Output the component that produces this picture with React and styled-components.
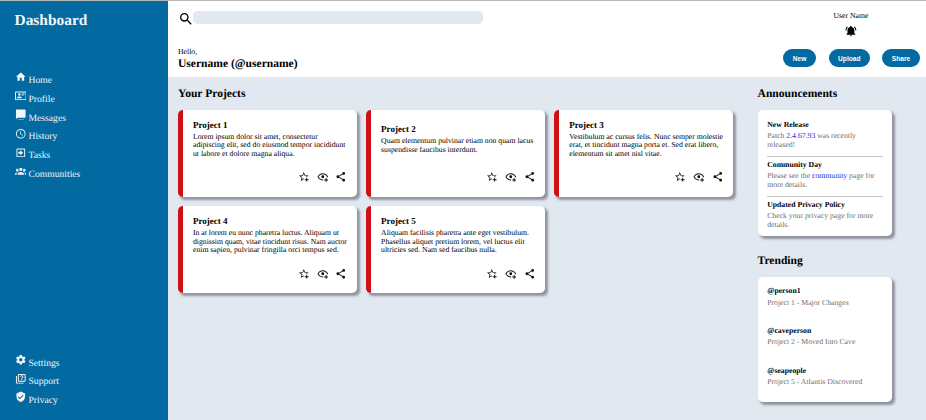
import React from "react";
import styled, { createGlobalStyle } from "styled-components";

const GlobalStyle = createGlobalStyle`
  *, *::before, *::after { box-sizing: border-box; }
  body {
    margin: 0;
    overflow: hidden;
    font-family: "Liberation Serif", "Times New Roman", serif;
    text-rendering: geometricPrecision;
    color: #000;
  }
  h1, h2, h3, p { margin: 0; }
`;

const Page = styled.div`
  display: grid;
  grid-template-columns: 168.4px 1fr;
  grid-template-rows: 76.4px 1fr;
  width: 926px;
  height: 420px;
  background: #e2e8f0;
  border-top: 1px solid #b4b6b8;
`;

const Sidebar = styled.aside`
  grid-row: 1 / 3;
  display: flex;
  flex-direction: column;
  padding: 11px 0 10.6px 14.5px;
  background: #0369a1;
  color: #f1f6fa;
`;

const Brand = styled.h1`
  font-size: 15.43px;
  line-height: 18px;
`;

const Nav = styled.nav`
  display: flex;
  flex-direction: column;
  margin-top: ${(p) => (p.$bottom ? "auto" : "40.6px")};
`;

const NavItem = styled.a`
  display: flex;
  gap: 2.4px;
  height: 18.8px;
  font-size: 9.65px;
  line-height: 18.8px;
`;

const NavLabel = styled.span`
  padding-top: 1.5px;
`;

const NavIconBox = styled.span`
  display: flex;
  width: 11.6px;
  padding-top: 0.8px;
`;

const Svg = styled.svg`
  display: block;
  flex: none;
  width: ${(p) => p.$size}px;
  height: ${(p) => p.$size}px;
  fill: currentColor;
`;

const Header = styled.header`
  display: flex;
  justify-content: space-between;
  padding-left: 9.6px;
  background: #fff;
`;

const HeaderLeft = styled.div`
  display: flex;
  flex-direction: column;
`;

const SearchRow = styled.div`
  display: flex;
  align-items: flex-start;
  height: 45.6px;
  padding-top: 9.6px;
  margin-left: -0.4px;
`;

const SearchField = styled.div`
  width: 289.5px;
  height: 13.1px;
  margin: 0.4px 0 0 -0.5px;
  border-radius: 4.8px;
  background: #e2e8f0;
`;

const Hello = styled.p`
  font-size: 7.72px;
  line-height: 10px;
`;

const Username = styled.h2`
  font-size: 11.57px;
  line-height: 13px;
`;

const HeaderRight = styled.div`
  display: flex;
  flex-direction: column;
  align-items: center;
  width: 150px;
  padding: 9.7px 0 0;
`;

const UserName = styled.p`
  font-size: 7.72px;
  line-height: 10px;
`;

const Bell = styled.div`
  margin-top: 4.3px;
`;

const Actions = styled.div`
  display: flex;
  align-self: stretch;
  gap: 12.4px;
  margin-top: 12.6px;
  padding-left: 7px;
`;

const Button = styled.button`
  width: ${(p) => p.$width}px;
  height: 17.3px;
  flex: none;
  padding: 0;
  border: 0;
  border-radius: 9px;
  background: #0369a1;
  color: #fff;
  font: bold 6.6px/17px "Liberation Sans", Arial, sans-serif;
`;

const Content = styled.main`
  display: grid;
  grid-template-columns: 554.8px 1fr;
  column-gap: 24.7px;
  padding: 9.6px 0 0 9.7px;
`;

const Section = styled.section`
  display: flex;
  flex-direction: column;
`;

const SectionTitle = styled.h2`
  font-size: 11.57px;
  line-height: 13px;
  margin-bottom: 10px;
`;

const CardGrid = styled.div`
  display: grid;
  grid-template-columns: repeat(3, 178.5px);
  grid-auto-rows: 86.7px;
  gap: 9.65px;
`;

const Card = styled.article`
  display: flex;
  flex-direction: column;
  padding: 7.6px 9.65px 13.9px 9.9px;
  border-left: 5px solid #cf1014;
  border-radius: 4.8px;
  background: #fff;
  box-shadow: 2.4px 2.4px 2.4px #9094a0;
`;

const CardBody = styled.div`
  display: flex;
  flex-direction: column;
  justify-content: center;
  height: 42.4px;
`;

const CardTitle = styled.h3`
  font-size: 9.03px;
  line-height: 13.2px;
  margin-bottom: 0.8px;
`;

const CardText = styled.p`
  font-size: 7.72px;
  line-height: 8.7px;
  white-space: pre;
`;

const CardActions = styled.div`
  display: flex;
  justify-content: flex-end;
  gap: 7.2px;
  margin-top: auto;
  color: #111;
`;

const Panel = styled.div`
  display: flex;
  flex-direction: column;
  width: 134.8px;
  height: ${(p) => p.$height}px;
  padding: 9.6px 9.65px 0;
  margin-bottom: ${(p) => p.$after || 0}px;
  border-radius: 4.8px;
  background: #fff;
  box-shadow: 2.4px 2.4px 2.4px #9094a0;
`;

const PanelItem = styled.div`
  flex: none;
  height: ${(p) => p.$height}px;
`;

const ItemTitle = styled.h3`
  font-size: 7.72px;
  line-height: 10px;
  margin-bottom: 2.3px;
`;

const ItemText = styled.p`
  font-size: 7.72px;
  line-height: 8.7px;
  color: #707070;
  white-space: pre;
`;

const Link = styled.span`
  color: #2525ee;
`;

const Rule = styled.div`
  height: 1.5px;
  margin: 6.6px 0 0;
  background: #c4c4c4;
`;

const paths = {
  home: "M10,20V14H14V20H19V12H22L12,3L2,12H5V20H10Z",
  profile:
    "M22,3H2C0.91,3.04 0.04,3.91 0,5V19C0.04,20.09 0.91,20.96 2,21H22C23.09,20.96 23.96,20.09 24,19V5C23.96,3.91 23.09,3.04 22,3M22,19H2V5H22V19M14,17V15.75C14,14.09 10.66,13.25 9,13.25C7.34,13.25 4,14.09 4,15.75V17H14M9,7A2.5,2.5 0 0,0 6.5,9.5A2.5,2.5 0 0,0 9,12A2.5,2.5 0 0,0 11.5,9.5A2.5,2.5 0 0,0 9,7M14,7V8H20V7H14M14,9V10H20V9H14M14,11V12H18V11H14",
  messages:
    "M3,1H21A1,1 0 0,1 22,2V17A1,1 0 0,1 21,18H6L2,21V2A1,1 0 0,1 3,1M7.5,20.5H9.5V22.5H7.5ZM11.5,20.5H13.5V22.5H11.5ZM15.5,20.5H17.5V22.5H15.5Z",
  history:
    "M12,20A8,8 0 0,0 20,12A8,8 0 0,0 12,4A8,8 0 0,0 4,12A8,8 0 0,0 12,20M12,2A10,10 0 0,1 22,12A10,10 0 0,1 12,22C6.47,22 2,17.5 2,12A10,10 0 0,1 12,2M12.5,7V12.25L17,14.92L16.25,16.15L11,13V7H12.5Z",
  tasks:
    "M5,3H19A2,2 0 0,1 21,5V19A2,2 0 0,1 19,21H5A2,2 0 0,1 3,19V5A2,2 0 0,1 5,3M5,5V19H19V5H5M7,10H11V7L17,12L11,17V14H7Z",
  communities:
    "M12,5.5A3.5,3.5 0 0,1 15.5,9A3.5,3.5 0 0,1 12,12.5A3.5,3.5 0 0,1 8.5,9A3.5,3.5 0 0,1 12,5.5M5,8C5.56,8 6.08,8.15 6.53,8.42C6.38,9.85 6.8,11.27 7.66,12.38C7.16,13.34 6.16,14 5,14A3,3 0 0,1 2,11A3,3 0 0,1 5,8M19,8A3,3 0 0,1 22,11A3,3 0 0,1 19,14C17.84,14 16.84,13.34 16.34,12.38C17.2,11.27 17.62,9.85 17.47,8.42C17.92,8.15 18.44,8 19,8M5.5,18.25C5.5,16.18 8.41,14.5 12,14.5C15.59,14.5 18.5,16.18 18.5,18.25V20H5.5V18.25M0,20V18.5C0,17.11 1.89,15.94 4.45,15.6C3.86,16.28 3.5,17.22 3.5,18.25V20H0M24,20H20.5V18.25C20.5,17.22 20.14,16.28 19.55,15.6C22.11,15.94 24,17.11 24,18.5V20Z",
  settings:
    "M12,15.5A3.5,3.5 0 0,1 8.5,12A3.5,3.5 0 0,1 12,8.5A3.5,3.5 0 0,1 15.5,12A3.5,3.5 0 0,1 12,15.5M19.43,12.97C19.47,12.65 19.5,12.33 19.5,12C19.5,11.67 19.47,11.34 19.43,11L21.54,9.37C21.73,9.22 21.78,8.95 21.66,8.73L19.66,5.27C19.54,5.05 19.27,4.96 19.05,5.05L16.56,6.05C16.04,5.66 15.5,5.32 14.87,5.07L14.5,2.42C14.46,2.18 14.25,2 14,2H10C9.75,2 9.54,2.18 9.5,2.42L9.13,5.07C8.5,5.32 7.96,5.66 7.44,6.05L4.95,5.05C4.73,4.96 4.46,5.05 4.34,5.27L2.34,8.73C2.21,8.95 2.27,9.22 2.46,9.37L4.57,11C4.53,11.34 4.5,11.67 4.5,12C4.5,12.33 4.53,12.65 4.57,12.97L2.46,14.63C2.27,14.78 2.21,15.05 2.34,15.27L4.34,18.73C4.46,18.95 4.73,19.03 4.95,18.95L7.44,17.94C7.96,18.34 8.5,18.68 9.13,18.93L9.5,21.58C9.54,21.82 9.75,22 10,22H14C14.25,22 14.46,21.82 14.5,21.58L14.87,18.93C15.5,18.67 16.04,18.34 16.56,17.94L19.05,18.95C19.27,19.03 19.54,18.95 19.66,18.73L21.66,15.27C21.78,15.05 21.73,14.78 21.54,14.63L19.43,12.97Z",
  support:
    "M4,6V20H18V22H4A2,2 0 0,1 2,20V6H4M8,2H20A2,2 0 0,1 22,4V16A2,2 0 0,1 20,18H8A2,2 0 0,1 6,16V4A2,2 0 0,1 8,2M8,4V16H20V4H8M13,13H15V15H13V13M10.8,8A3.2,3.2 0 1,1 15.6,10.7Q15,11.1 15,12H13Q13,10.2 14.4,9.2A1.4,1.4 0 1,0 12.6,8Z",
  privacy:
    "M10,17L6,13L7.41,11.59L10,14.17L16.59,7.58L18,9M12,1L3,5V11C3,16.55 6.84,21.74 12,23C17.16,21.74 21,16.55 21,11V5L12,1Z",
  search:
    "M9.5,3A6.5,6.5 0 0,1 16,9.5C16,11.11 15.41,12.59 14.44,13.73L14.71,14H15.5L20.5,19L19,20.5L14,15.5V14.71L13.73,14.44C12.59,15.41 11.11,16 9.5,16A6.5,6.5 0 0,1 3,9.5A6.5,6.5 0 0,1 9.5,3M9.5,5C7,5 5,7 5,9.5C5,12 7,14 9.5,14C12,14 14,12 14,9.5C14,7 12,5 9.5,5Z",
  bell: "M21,19V20H3V19L5,17V11C5,7.9 7.03,5.17 10,4.29C10,4.19 10,4.1 10,4A2,2 0 0,1 12,2A2,2 0 0,1 14,4C14,4.1 14,4.19 14,4.29C16.97,5.17 19,7.9 19,11V17L21,19M14,21A2,2 0 0,1 12,23A2,2 0 0,1 10,21M19.75,3.19L18.33,4.61C20.04,6.3 21,8.6 21,11H23C23,8.07 21.84,5.25 19.75,3.19M1,11H3C3,8.6 3.96,6.3 5.67,4.61L4.25,3.19C2.16,5.25 1,8.07 1,11Z",
  star: "M5.8 21L7.4 14L2 9.2L9.2 8.6L12 2L14.8 8.6L22 9.2L18.8 12H18C17.3 12 16.6 12.1 15.9 12.4L18.1 10.5L13.7 10.1L12 6.1L10.3 10.1L5.9 10.5L9.2 13.4L8.2 17.7L12 15.4L12.5 15.7C12.3 16.2 12.1 16.8 12.1 17.3L5.8 21M17 14V17H14V19H17V22H19V19H22V17H19V14H17Z",
  watch:
    "M12,4.5C7,4.5 2.73,7.61 1,12C2.73,16.39 7,19.5 12,19.5C12.36,19.5 12.72,19.5 13.08,19.45C13.03,19.13 13,18.82 13,18.5C13,18.17 13.03,17.84 13.08,17.5C12.72,17.5 12.36,17.5 12,17.5C8.24,17.5 4.83,15.36 3.18,12C4.83,8.64 8.24,6.5 12,6.5C15.76,6.5 19.17,8.64 20.82,12C20.7,12.24 20.56,12.45 20.43,12.68C21.09,12.84 21.72,13.11 22.29,13.5C22.56,13 22.8,12.5 23,12C21.27,7.61 17,4.5 12,4.5M12,9A3,3 0 1,0 12,15A3,3 0 0,0 12,9M18,14.5V17.5H15V19.5H18V22.5H20V19.5H23V17.5H20V14.5H18Z",
  share:
    "M18,16.08C17.24,16.08 16.56,16.38 16.04,16.85L8.91,12.7C8.96,12.47 9,12.24 9,12C9,11.76 8.96,11.53 8.91,11.3L15.96,7.19C16.5,7.69 17.21,8 18,8A3,3 0 0,0 21,5A3,3 0 0,0 18,2A3,3 0 0,0 15,5C15,5.24 15.04,5.47 15.09,5.7L8.04,9.81C7.5,9.31 6.79,9 6,9A3,3 0 0,0 3,12A3,3 0 0,0 6,15C6.79,15 7.5,14.69 8.04,14.19L15.16,18.34C15.11,18.55 15.08,18.77 15.08,19C15.08,20.61 16.39,21.91 18,21.91C19.61,21.91 20.92,20.61 20.92,19A2.92,2.92 0 0,0 18,16.08Z",
};

const Icon = ({ name, size = 11.57 }) => (
  <Svg viewBox="0 0 24 24" $size={size} aria-hidden="true">
    <path d={paths[name]} />
  </Svg>
);

const mainLinks = [
  ["home", "Home"],
  ["profile", "Profile"],
  ["messages", "Messages"],
  ["history", "History"],
  ["tasks", "Tasks"],
  ["communities", "Communities"],
];

const footerLinks = [
  ["settings", "Settings"],
  ["support", "Support"],
  ["privacy", "Privacy"],
];

const projects = [
  ["Project 1", "Lorem ipsum dolor sit amet, consectetur\nadipiscing elit, sed do eiusmod tempor incididunt\nut labore et dolore magna aliqua."],
  ["Project 2", "Quam elementum pulvinar etiam non quam lacus\nsuspendisse faucibus interdum."],
  ["Project 3", "Vestibulum ac cursus felis. Nunc semper molestie\nerat, et tincidunt magna porta et. Sed erat libero,\nelementum sit amet nisl vitae."],
  ["Project 4", "In at lorem eu nunc pharetra luctus. Aliquam ut\ndignissim quam, vitae tincidunt risus. Nam auctor\nenim sapien, pulvinar fringilla orci tempus sed."],
  ["Project 5", "Aliquam facilisis pharetra ante eget vestibulum.\nPhasellus aliquet pretium lorem, vel luctus elit\nultricies sed. Nam sed faucibus nulla."],
];

const trending = [
  ["@person1", "Project 1 - Major Changes"],
  ["@caveperson", "Project 2 - Moved Into Cave"],
  ["@seapeople", "Project 5 - Atlantis Discovered"],
];

const NavList = ({ links, bottom }) => (
  <Nav $bottom={bottom}>
    {links.map(([icon, label]) => (
      <NavItem key={label}>
        <NavIconBox>
          <Icon name={icon} />
        </NavIconBox>
        <NavLabel>{label}</NavLabel>
      </NavItem>
    ))}
  </Nav>
);

export default function App() {
  return (
    <>
      <GlobalStyle />
      <Page>
        <Sidebar>
          <Brand>Dashboard</Brand>
          <NavList links={mainLinks} />
          <NavList links={footerLinks} bottom />
        </Sidebar>
        <Header>
          <HeaderLeft>
            <SearchRow>
              <Icon name="search" size={16} />
              <SearchField />
            </SearchRow>
            <Hello>Hello,</Hello>
            <Username>Username (@username)</Username>
          </HeaderLeft>
          <HeaderRight>
            <UserName>User Name</UserName>
            <Bell>
              <Icon name="bell" size={11.8} />
            </Bell>
            <Actions>
              <Button $width={33.2}>New</Button>
              <Button $width={41.4}>Upload</Button>
              <Button $width={37.3}>Share</Button>
            </Actions>
          </HeaderRight>
        </Header>
        <Content>
          <Section>
            <SectionTitle>Your Projects</SectionTitle>
            <CardGrid>
              {projects.map(([title, text]) => (
                <Card key={title}>
                  <CardBody>
                    <CardTitle>{title}</CardTitle>
                    <CardText>{text}</CardText>
                  </CardBody>
                  <CardActions>
                    <Icon name="star" />
                    <Icon name="watch" />
                    <Icon name="share" />
                  </CardActions>
                </Card>
              ))}
            </CardGrid>
          </Section>
          <Section>
            <SectionTitle>Announcements</SectionTitle>
            <Panel $height={125.8} $after={18}>
              <PanelItem $height={40}>
                <ItemTitle>New Release</ItemTitle>
                <ItemText>
                  Patch <Link>2.4.67.93</Link> was recently
                </ItemText>
                <ItemText>released!</ItemText>
                <Rule />
              </PanelItem>
              <PanelItem $height={40}>
                <ItemTitle>Community Day</ItemTitle>
                <ItemText>
                  Please see the <Link>community</Link> page for
                </ItemText>
                <ItemText>more details.</ItemText>
                <Rule />
              </PanelItem>
              <PanelItem $height={36}>
                <ItemTitle>Updated Privacy Policy</ItemTitle>
                <ItemText>{"Check your privacy page for more\ndetails."}</ItemText>
              </PanelItem>
            </Panel>
            <SectionTitle>Trending</SectionTitle>
            <Panel $height={125.2}>
              {trending.map(([who, what]) => (
                <PanelItem key={who} $height={39.6}>
                  <ItemTitle>{who}</ItemTitle>
                  <ItemText>{what}</ItemText>
                </PanelItem>
              ))}
            </Panel>
          </Section>
        </Content>
      </Page>
    </>
  );
}
